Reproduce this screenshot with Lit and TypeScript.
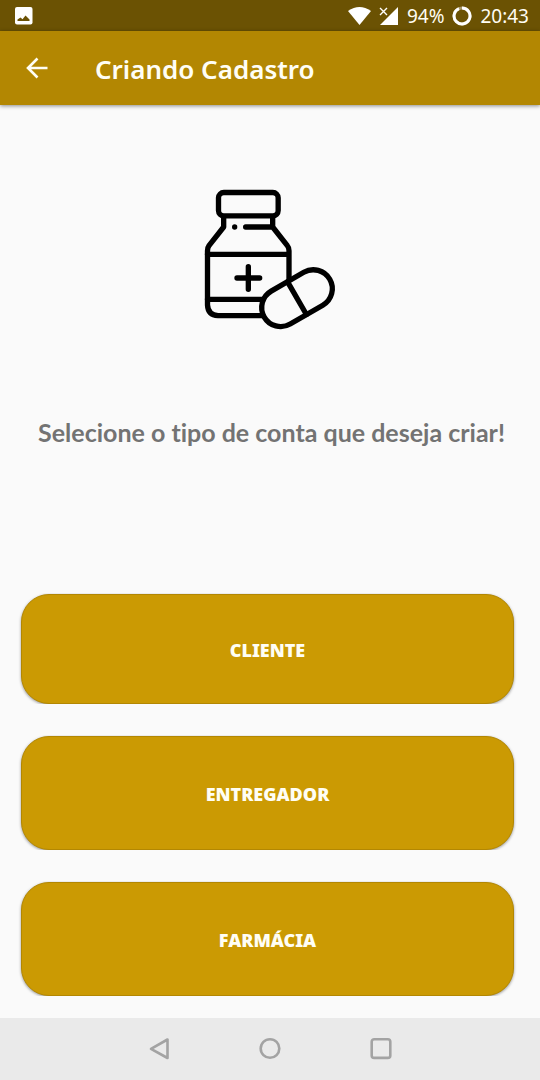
import { LitElement, html, css } from "lit";
import { customElement } from "lit/decorators.js";

@customElement("status-bar")
class StatusBar extends LitElement {
  static styles = css`
    :host {
      display: flex;
      align-items: center;
      height: 31px;
      padding: 0 11px 0 15px;
      background: #6b5203;
      color: #fffdf4;
      font-size: 19px;
      line-height: 31px;
    }
    svg {
      display: block;
    }
    .end {
      display: flex;
      align-items: center;
      gap: 8px;
      margin-left: auto;
    }
    .text {
      padding-top: 2px;
    }
  `;

  render() {
    return html`
      <svg width="18" height="18" viewBox="0 0 18 18">
        <rect width="17.500" height="17.500" rx="2" fill="#fff" />
        <path d="M2.500 14V12.500L5.500 10.500 7.500 12.200 10.500 8.500 14.500 12.500V14Z" fill="#6b5203" />
      </svg>
      <div class="end">
        <svg width="23" height="18" viewBox="0 0 23 18">
          <path d="M0 4Q11.500-4 23 4L11.500 18Z" fill="#fff" />
        </svg>
        <svg width="20" height="18" viewBox="0 0 20 18">
          <path d="M19 0V18H1Z" fill="#fff" />
          <path d="M1 1 8 8M8 1 1 8" stroke="#fff" stroke-width="1.400" />
        </svg>
        <span class="text">94%</span>
        <svg width="20" height="20" viewBox="0 0 20 20" fill="none" stroke="#fff" stroke-width="3">
          <circle cx="10" cy="10" r="8" stroke="#a6976a" />
          <path d="M10 2A8 8 0 1 1 7 2.600" />
        </svg>
        <time class="text">20:43</time>
      </div>
    `;
  }
}

@customElement("app-header")
class AppHeader extends LitElement {
  static styles = css`
    :host {
      display: flex;
      align-items: center;
      gap: 45px;
      height: 74px;
      padding: 0 24px;
      background: #b38702;
      color: #fffef5;
      box-shadow: 0 1px 4px rgba(0, 0, 0, 0.45);
    }
    button {
      padding: 0;
      border: 0;
      background: none;
      color: inherit;
    }
    svg {
      display: block;
    }
    h1 {
      margin: 0;
      padding-top: 2px;
      font-size: 26px;
      line-height: 36px;
      font-weight: 600;
    }
  `;

  render() {
    return html`
      <button aria-label="Voltar">
        <svg width="26" height="26" viewBox="0 0 26 26" fill="none" stroke="currentColor" stroke-width="2.600">
          <path d="M23.500 13H4.500M13.500 3.500 4 13 13.500 22.500" />
        </svg>
      </button>
      <h1>Criando Cadastro</h1>
    `;
  }
}

@customElement("nav-bar")
class NavBar extends LitElement {
  static styles = css`
    :host {
      display: flex;
      align-items: center;
      justify-content: center;
      gap: 85px;
      height: 62px;
      background: #eaeaea;
    }
    button {
      padding: 0;
      border: 0;
      background: none;
    }
    svg {
      display: block;
      fill: none;
      stroke: #a3a3a3;
      stroke-width: 2.6;
      stroke-linejoin: round;
    }
  `;

  render() {
    return html`
      <button aria-label="Voltar">
        <svg width="26" height="26" viewBox="0 0 26 26"><path d="M21.500 3.500V22L5 12.800Z" /></svg>
      </button>
      <button aria-label="Início">
        <svg width="26" height="26" viewBox="0 0 26 26"><circle cx="13" cy="12.500" r="9.300" /></svg>
      </button>
      <button aria-label="Recentes">
        <svg width="26" height="26" viewBox="0 0 26 26"><rect x="3.700" y="3.300" width="18.600" height="18.600" rx="2.500" /></svg>
      </button>
    `;
  }
}

@customElement("app-root")
class AppRoot extends LitElement {
  static styles = css`
    :host {
      display: flex;
      flex-direction: column;
      min-height: 100vh;
      background: #fafafa;
      font-family: "Noto Sans", "Open Sans", sans-serif;
    }
    main {
      display: flex;
      flex: 1;
      flex-direction: column;
      padding: 75px 26px 22px 21px;
    }
    .art {
      display: block;
      align-self: center;
      margin-left: 5px;
    }
    p {
      margin: 74px 0 0;
      padding-left: 8px;
      color: #737373;
      font-family: Lato, "Noto Sans", sans-serif;
      font-size: 25px;
      line-height: 36px;
      font-weight: 700;
      font-variant-ligatures: none;
      text-align: center;
    }
    .choices {
      display: grid;
      gap: 32px;
      margin-top: auto;
    }
    .choice {
      box-sizing: border-box;
      height: 114px;
      padding: 2px 0 0;
      border: 1px solid #b38702;
      border-radius: 28px;
      background: #cb9a03;
      color: #fffef5;
      box-shadow: 0 1px 3px rgba(0, 0, 0, 0.4);
      clip-path: inset(-1px -3px 0 -3px);
      font: 900 18px/24px "Noto Sans", "Open Sans", sans-serif;
      text-transform: uppercase;
    }
    .choice:first-child {
      height: 110px;
    }
  `;

  render() {
    return html`
      <status-bar></status-bar>
      <app-header></app-header>
      <main>
        <svg class="art" width="160" height="160" viewBox="0 0 480 480" fill="none" stroke="#000" stroke-width="16" stroke-linecap="round" stroke-linejoin="round" role="img" aria-label="Medicamentos">
          <rect x="85.500" y="37.500" width="179" height="70" rx="16" />
          <path d="M101 110V141L57 197Q52.500 203 52.500 212V375Q54 405 84 407H218" />
          <path d="M248 110V141L292 197Q297 203 297 212V300M167 141H248M52.500 223H297M52.500 358H218" />
          <path d="M175 260V328M141 294H209" />
          <circle cx="134" cy="141" r="8" fill="#000" stroke="none" />
          <g transform="rotate(-30 321 354.500)">
            <rect x="207.500" y="297.500" width="227" height="114" rx="57" fill="#fafafa" />
            <path d="M321 298V411" />
          </g>
        </svg>
        <p>Selecione o tipo de conta que deseja criar!</p>
        <div class="choices">
          ${["Cliente", "Entregador", "Farmácia"].map(
            (name) => html`<button class="choice">${name}</button>`
          )}
        </div>
      </main>
      <nav-bar></nav-bar>
    `;
  }
}
